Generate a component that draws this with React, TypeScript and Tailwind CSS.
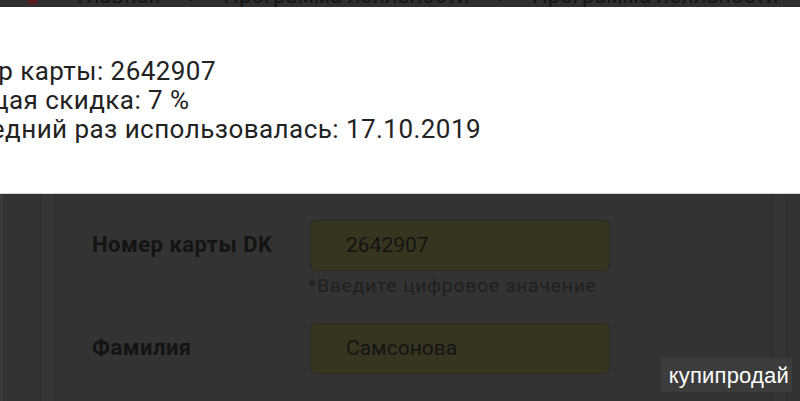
import React from 'react';

const font = { fontFamily: 'Roboto, "Noto Sans", sans-serif' };

const Crumbs = () => (
  <div className="h-[7px] overflow-hidden bg-[#2f2f2f]">
    <div className="-mt-[15px] flex items-center gap-[28px] pl-[28px] text-[22px] leading-[22px] text-[#151515]">
      <span className="h-[16px] w-[9px] bg-[#5a1c1c]"></span>
      <span className="ml-[12px]">Главная</span>
      <span className="text-[#111]">›</span>
      <span>Программа лояльности</span>
      <span className="text-[#111]">›</span>
      <span>Программа лояльности</span>
    </div>
  </div>
);

const Field = ({ label, value, hint }: { label: string; value: string; hint?: string }) => (
  <div className="flex">
    <div className="w-[218px] pt-[12px] text-[22px] font-bold leading-[26px] tracking-[0.5px] text-[#141414]">{label}</div>
    <div>
      <div className="flex h-[51px] w-[300px] items-center rounded-[6px] border border-[#2b2a1f] bg-[#37341f] pl-[35px] text-[21px] text-[#141414]">
        {value}
      </div>
      {hint && (
        <div className="-ml-[2px] mt-[4px] text-[19px] leading-[22px] tracking-[0.95px] text-[#1f1f1f]">{hint}</div>
      )}
    </div>
  </div>
);

export default function App() {
  return (
    <div className="relative h-[401px] w-[800px] overflow-hidden bg-[#333]" style={font}>
      <Crumbs />
      <div className="h-[187px] overflow-hidden border-b border-[#d6d6d6] bg-white pt-[50px]">
        <div className="whitespace-nowrap text-[26px] leading-[29px] tracking-[0.45px] text-[#222]">
          <div className="-ml-[70px]">Номер карты: 2642907</div>
          <div className="-ml-[46px]">Общая скидка: 7 %</div>
          <div className="-ml-[73px]">Последний раз использовалась: 17.10.2019</div>
        </div>
      </div>
      <div className="flex h-[207px]">
        <div className="w-[40px] border-l-[3px] border-[#3a3a3a]"></div>
        <div className="w-[15px] border-x border-[#2c2c2c] bg-[#353535]"></div>
        <div className="flex-1 pl-[37px] pt-[26px]">
          <div className="flex flex-col gap-[26px]">
            <Field label="Номер карты DK" value="2642907" hint="*Введите цифровое значение" />
            <Field label="Фамилия" value="Самсонова" />
          </div>
        </div>
        <div className="w-[15px] border-x border-[#2c2c2c] bg-[#353535]"></div>
        <div className="w-[13px]"></div>
      </div>
      <div className="absolute bottom-[9px] right-[8px] flex h-[34px] items-center bg-[#3c3c3c] pl-[8px] pr-[3px] text-[22px] tracking-[0.2px] text-white" style={{ fontFamily: '"Liberation Sans", Arial, sans-serif' }}>
        купипродай
      </div>
    </div>
  );
}
